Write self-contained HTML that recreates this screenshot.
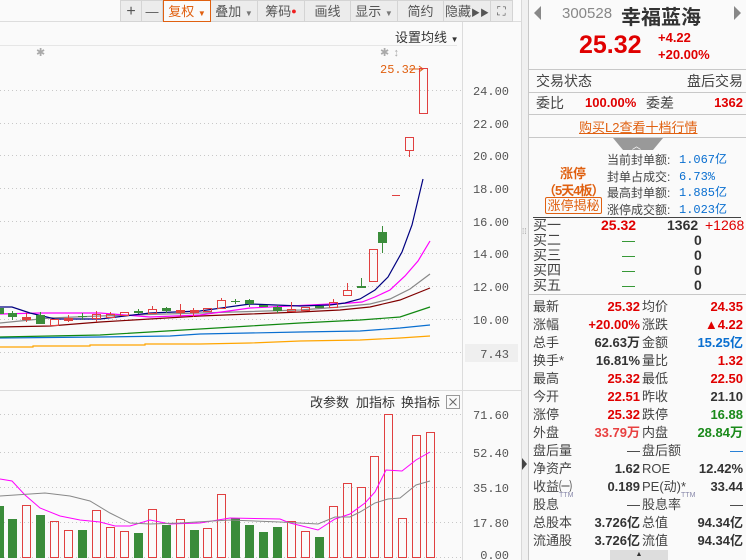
<!DOCTYPE html>
<html><head><meta charset="utf-8"><style>
*{margin:0;padding:0;box-sizing:border-box}
body{width:746px;height:560px;overflow:hidden;background:#fafafa;font-family:"Liberation Sans","Noto Sans CJK SC",sans-serif;position:relative}
.abs{position:absolute}
.tb{position:absolute;top:0;height:22px;background:#ececec;border:1px solid #d4d4d4;border-left:none;font-size:13px;color:#555;text-align:center;line-height:21px}
.rp{position:absolute;left:528px;top:0;width:218px;height:560px;background:#fafafa;border-left:1px solid #c8c8c8}
.row{position:absolute;left:4px;width:210px;font-size:13px;height:18px;line-height:18px;color:#444}
.row span{position:absolute;top:0}
.b{font-weight:bold}
.r{color:#e00000}.g{color:#1a8a1a}.bl{color:#0a6fd0}.k{color:#333}
.sp{font-size:7px;color:#88a;position:relative;top:-6px;line-height:0}
</style></head><body>
<div class="abs" style="left:0;top:0;width:521px;height:22px;background:#fafafa;border-bottom:1px solid #ddd"></div>
<div class="tb" style="left:120px;width:22px;border-left:1px solid #d4d4d4;font-size:16px">+</div>
<div class="tb" style="left:142px;width:21px">—</div>
<div class="tb" style="left:163px;width:48px;border:1px solid #e06010;color:#e06010;background:#fafafa">复权 <span style="font-size:8px">▼</span></div>
<div class="tb" style="left:211px;width:47px">叠加 <span style="font-size:8px;color:#777">▼</span></div>
<div class="tb" style="left:258px;width:47px">筹码<span style="color:#f02020;font-size:9px;vertical-align:top">●</span></div>
<div class="tb" style="left:305px;width:46px">画线</div>
<div class="tb" style="left:351px;width:47px">显示 <span style="font-size:8px;color:#777">▼</span></div>
<div class="tb" style="left:398px;width:46px">简约</div>
<div class="tb" style="left:444px;width:47px">隐藏<span style="font-size:9px">▶▶</span></div>
<div class="tb" style="left:491px;width:22px;font-size:12px">⛶</div>
<div class="abs" style="left:395px;top:27px;font-size:13px;color:#333">设置均线 <span style="font-size:8px">▼</span></div>
<div class="abs" style="left:0;top:45px;width:457px;height:1px;background:#e6e6e6"></div>
<div class="abs" style="left:521px;top:0;width:7px;height:560px;background:#f0f0f0;border-left:1px solid #d8d8d8"></div>
<div class="abs" style="left:522px;top:458px;width:0;height:0;border-left:5px solid #444;border-top:6px solid transparent;border-bottom:6px solid transparent"></div>
<div class="abs" style="left:522px;top:227px;font-size:8px;color:#999">⁞⁞</div>
<svg class="abs" style="left:0;top:0" width="521" height="560" font-family="Liberation Mono,monospace">
<line x1="462.5" y1="22" x2="462.5" y2="560" stroke="#dcdcdc"/>
<line x1="0" y1="390.5" x2="521" y2="390.5" stroke="#dcdcdc"/>
<g stroke="#c8c8c8" stroke-dasharray="1,3">
<line x1="0" y1="90.5" x2="462" y2="90.5"/><line x1="0" y1="123.5" x2="462" y2="123.5"/><line x1="0" y1="155.5" x2="462" y2="155.5"/><line x1="0" y1="188.5" x2="462" y2="188.5"/><line x1="0" y1="221.5" x2="462" y2="221.5"/><line x1="0" y1="253.5" x2="462" y2="253.5"/><line x1="0" y1="286.5" x2="462" y2="286.5"/><line x1="0" y1="319.5" x2="462" y2="319.5"/><line x1="0" y1="352.5" x2="462" y2="352.5"/>
<line x1="0" y1="414.5" x2="462" y2="414.5"/><line x1="0" y1="452.5" x2="462" y2="452.5"/><line x1="0" y1="487.5" x2="462" y2="487.5"/><line x1="0" y1="522.5" x2="462" y2="522.5"/><line x1="0" y1="557.5" x2="462" y2="557.5"/>
</g>
<g font-size="12" fill="#555" text-anchor="end">
<text x="509" y="95">24.00</text><text x="509" y="128">22.00</text><text x="509" y="160">20.00</text><text x="509" y="193">18.00</text><text x="509" y="226">16.00</text><text x="509" y="258">14.00</text><text x="509" y="291">12.00</text><text x="509" y="324">10.00</text>
<rect x="465" y="344" width="53" height="18" fill="#efefef"/><text x="509" y="358">7.43</text>
<text x="509" y="419">71.60</text><text x="509" y="457">52.40</text><text x="509" y="492">35.10</text><text x="509" y="527">17.80</text><text x="509" y="559">0.00</text>
</g>
<text x="380" y="73" font-size="12" fill="#e06010">25.32</text>
<path d="M409 69h14M419 66l4 3-4 3" stroke="#e06010" fill="none"/>
<text x="36" y="56" font-size="11" fill="#aaa">✱</text><text x="380" y="56" font-size="11" fill="#aaa">✱</text><text x="393" y="56" font-size="11" fill="#aaa">↕</text>
<g fill="none" stroke-width="1.2">
<polyline stroke="#ffa500" points="0,347 33,347 33,346 90,346 90,345 145,345 145,344 200,344 250,343 300,341 360,340 400,338 430,336"/>
<polyline stroke="#0a6fd0" points="0,338 100,337 170,336 200,334 300,332 360,331 400,328 430,325"/>
<polyline stroke="#118811" points="0,337 50,336 100,335 150,332 200,329 250,326 300,323 360,320 400,317 430,307"/>
<polyline stroke="#800000" points="0,327 50,326 100,322 150,319 200,316 250,314 300,312 340,310 370,307 400,300 430,288"/>
<polyline stroke="#888" points="0,323 50,318 100,316 200,313 300,310 340,307 370,304 390,299 410,289 430,274"/>
<polyline stroke="#ff00ff" points="0,314 40,313 100,313 150,317 200,315 250,308 330,304 350,303 362,302 375,297 390,290 405,276 418,261 430,241"/>
<polyline stroke="#000080" points="0,307 12,307 30,313 55,319 100,319 150,313 200,311 250,304 300,306 330,305 345,303 360,299 375,290 388,277 402,252 412,225 423,179"/>
</g>
<g stroke-width="1">
<rect x="0" y="308" width="4" height="6" fill="#3a8c3a"/>
<rect x="8" y="313" width="9" height="4" fill="#3a8c3a"/><line x1="12.5" y1="311" x2="12.5" y2="320" stroke="#3a8c3a"/>
<line x1="26.5" y1="313" x2="26.5" y2="322" stroke="#e04040"/><rect x="22" y="317" width="9" height="3" fill="#e04040"/>
<rect x="36" y="315" width="9" height="9" fill="#3a8c3a"/><line x1="40.5" y1="312" x2="40.5" y2="324" stroke="#3a8c3a"/>
<rect x="50.5" y="319.5" width="8" height="6" fill="none" stroke="#e04040"/>
<line x1="68.5" y1="315" x2="68.5" y2="322" stroke="#e04040"/><rect x="64" y="318" width="9" height="3" fill="#e04040"/>
<line x1="78" y1="316.5" x2="87" y2="316.5" stroke="#3a8c3a"/><line x1="82.5" y1="313" x2="82.5" y2="320" stroke="#3a8c3a"/>
<line x1="96.5" y1="311" x2="96.5" y2="322" stroke="#e04040"/><rect x="92.5" y="314.5" width="8" height="4" fill="none" stroke="#e04040"/>
<rect x="106.5" y="314.5" width="8" height="3" fill="none" stroke="#e04040"/><line x1="110.5" y1="312" x2="110.5" y2="314" stroke="#e04040"/>
<rect x="120.5" y="312.5" width="8" height="3" fill="none" stroke="#e04040"/>
<rect x="134" y="311" width="9" height="2" fill="#3a8c3a"/><line x1="138.5" y1="309" x2="138.5" y2="314" stroke="#3a8c3a"/>
<rect x="148.5" y="309.5" width="8" height="4" fill="none" stroke="#e04040"/><line x1="152.5" y1="306" x2="152.5" y2="309" stroke="#e04040"/>
<rect x="162" y="308" width="9" height="3" fill="#3a8c3a"/><line x1="166.5" y1="307" x2="166.5" y2="313" stroke="#3a8c3a"/>
<rect x="176" y="310" width="9" height="3" fill="#e04040"/><line x1="180.5" y1="304" x2="180.5" y2="316" stroke="#e04040"/>
<rect x="190" y="310" width="9" height="3" fill="#e04040"/><line x1="193.5" y1="308" x2="193.5" y2="317" stroke="#e04040"/>
<rect x="203.5" y="308.5" width="8" height="3" fill="none" stroke="#e04040"/>
<rect x="217.5" y="300.5" width="8" height="8" fill="none" stroke="#e04040"/><line x1="221.5" y1="298" x2="221.5" y2="300" stroke="#e04040"/>
<line x1="231" y1="301.5" x2="240" y2="301.5" stroke="#3a8c3a"/><line x1="235.5" y1="299" x2="235.5" y2="304" stroke="#3a8c3a"/>
<rect x="245" y="300" width="9" height="4" fill="#3a8c3a"/><line x1="249.5" y1="299" x2="249.5" y2="307" stroke="#3a8c3a"/>
<rect x="259" y="305" width="9" height="2" fill="#3a8c3a"/>
<rect x="273" y="307" width="9" height="4" fill="#3a8c3a"/><line x1="277.5" y1="305" x2="277.5" y2="313" stroke="#3a8c3a"/>
<rect x="287.5" y="309.5" width="8" height="2" fill="none" stroke="#e04040"/><line x1="291.5" y1="302" x2="291.5" y2="309" stroke="#e04040"/>
<rect x="301.5" y="307.5" width="8" height="3" fill="none" stroke="#e04040"/>
<rect x="315" y="306" width="9" height="2" fill="#3a8c3a"/>
<rect x="329.5" y="302.5" width="8" height="5" fill="none" stroke="#e04040"/><line x1="333.5" y1="299" x2="333.5" y2="302" stroke="#e04040"/>
<rect x="343.5" y="290.5" width="8" height="5" fill="none" stroke="#e04040"/><line x1="347.5" y1="283" x2="347.5" y2="290" stroke="#e04040"/>
<rect x="357" y="286" width="9" height="2" fill="#3a8c3a"/><line x1="361.5" y1="278" x2="361.5" y2="287" stroke="#3a8c3a"/>
<rect x="369.5" y="249.5" width="8" height="32" fill="none" stroke="#e04040"/>
<rect x="378" y="232" width="9" height="11" fill="#3a8c3a"/><line x1="382.5" y1="226" x2="382.5" y2="253" stroke="#3a8c3a"/>
<line x1="392" y1="195.5" x2="400" y2="195.5" stroke="#e04040"/>
<rect x="405.5" y="137.5" width="8" height="13" fill="none" stroke="#e04040"/><line x1="409.5" y1="151" x2="409.5" y2="157" stroke="#e04040"/>
<rect x="419.5" y="68.5" width="8" height="45" fill="none" stroke="#e04040"/>
</g>
<text x="310" y="407" font-size="13" fill="#333" font-family="Liberation Sans,Noto Sans CJK SC,sans-serif">改参数</text>
<text x="356" y="407" font-size="13" fill="#333" font-family="Liberation Sans,Noto Sans CJK SC,sans-serif">加指标</text>
<text x="401" y="407" font-size="13" fill="#333" font-family="Liberation Sans,Noto Sans CJK SC,sans-serif">换指标</text>
<rect x="446.5" y="395.5" width="13" height="13" fill="#fafafa" stroke="#999"/><path d="M449.5 398.5l7 7M456.5 398.5l-7 7" stroke="#666"/>
<g fill="#3a8c3a">
<rect x="0" y="506" width="4" height="52"/><rect x="8" y="519" width="9" height="39"/><rect x="36" y="515" width="9" height="43"/><rect x="78" y="530" width="9" height="28"/><rect x="134" y="533" width="9" height="25"/><rect x="162" y="525" width="9" height="33"/><rect x="190" y="530" width="9" height="28"/><rect x="231" y="518" width="9" height="40"/><rect x="245" y="525" width="9" height="33"/><rect x="259" y="532" width="9" height="26"/><rect x="273" y="527" width="9" height="31"/><rect x="315" y="537" width="9" height="21"/>
</g>
<g fill="none" stroke="#e04040">
<rect x="22.5" y="505.5" width="8" height="52"/><rect x="50.5" y="521.5" width="8" height="36"/><rect x="64.5" y="530.5" width="8" height="27"/><rect x="92.5" y="510.5" width="8" height="47"/><rect x="106.5" y="527.5" width="8" height="30"/><rect x="120.5" y="531.5" width="8" height="26"/><rect x="148.5" y="509.5" width="8" height="48"/><rect x="176.5" y="519.5" width="8" height="38"/><rect x="203.5" y="528.5" width="8" height="29"/><rect x="217.5" y="494.5" width="8" height="63"/><rect x="287.5" y="521.5" width="8" height="36"/><rect x="301.5" y="531.5" width="8" height="26"/><rect x="329.5" y="506.5" width="8" height="51"/><rect x="343.5" y="483.5" width="8" height="74"/><rect x="357.5" y="487.5" width="8" height="70"/><rect x="370.5" y="456.5" width="8" height="101"/><rect x="384.5" y="414.5" width="8" height="143"/><rect x="398.5" y="518.5" width="8" height="39"/><rect x="412.5" y="435.5" width="8" height="122"/><rect x="426.5" y="432.5" width="8" height="125"/>
</g>
<polyline fill="none" stroke="#ff00ff" points="0,479 12,481 25,495 40,508 60,516 80,520 100,522 115,526 130,526 150,520 170,524 200,523 230,518 280,519 290,523 318,530 335,519 350,514 365,503 375,492 386,470 402,471 416,460 430,452"/>
<polyline fill="none" stroke="#888" points="0,496 30,494 45,493 70,496 90,501 110,513 130,523 150,524 180,523 230,520 280,522 318,524 335,517 350,517 360,512 375,503 388,499 400,498 416,485 430,481"/>
</svg>
<div class="rp">
<div class="abs" style="left:5px;top:6px;width:0;height:0;border-right:7px solid #888;border-top:7px solid transparent;border-bottom:7px solid transparent"></div>
<div class="abs" style="left:205px;top:6px;width:0;height:0;border-left:7px solid #888;border-top:7px solid transparent;border-bottom:7px solid transparent"></div>
<div class="abs" style="left:33px;top:5px;font-size:15px;color:#888">300528</div>
<div class="abs" style="left:92px;top:1px;font-size:20px;font-weight:bold;color:#333">幸福蓝海</div>
<div class="abs b r" style="left:50px;top:31px;font-size:25px">25.32</div>
<div class="abs b r" style="left:129px;top:30px;font-size:13px">+4.22</div>
<div class="abs b r" style="left:129px;top:47px;font-size:13px">+20.00%</div>
<div class="abs" style="left:0;top:69px;width:218px;height:1px;background:#c8c8c8"></div>
<div class="abs" style="left:0;top:92px;width:218px;height:1px;background:#c8c8c8"></div>
<div class="abs" style="left:0;top:114px;width:218px;height:1px;background:#c8c8c8"></div>
<div class="abs" style="left:0;top:137px;width:218px;height:1px;background:#c8c8c8"></div>
<div class="row" style="top:72px;font-size:14px"><span style="left:3px">交易状态</span><span style="right:0">盘后交易</span></div>
<div class="row" style="top:94px;font-size:14px"><span style="left:3px">委比</span><span class="b r" style="left:52px;font-size:13px">100.00%</span><span style="left:113px">委差</span><span class="b r" style="right:0;font-size:13px">1362</span></div>
<div class="abs" style="left:50px;top:117px;font-size:13px;color:#e06010;text-decoration:underline">购买L2查看十档行情</div>
<div class="abs" style="left:84px;top:138px;width:50px;height:12px;background:#999;clip-path:polygon(0 0,100% 0,80% 100%,20% 100%)"></div>
<div class="abs" style="left:103px;top:139px;font-size:9px;color:#fff">︿</div>
<div class="abs b" style="left:31px;top:163px;font-size:13px;color:#e06010">涨停</div>
<div class="abs b" style="left:14px;top:180px;font-size:13px;color:#e06010;letter-spacing:-1px">（5天4板）</div>
<div class="abs" style="left:16px;top:197px;width:57px;height:17px;border:1px solid #e06010;font-size:13px;color:#e06010;line-height:15px;text-align:center;border-radius:2px;white-space:nowrap">涨停揭秘</div>
<div class="abs" style="left:78px;top:152px;font-size:12px;line-height:16.5px;color:#444">当前封单额:<br>封单占成交:<br>最高封单额:<br>涨停成交额:</div>
<div class="abs" style="left:150px;top:152px;font-size:12px;line-height:16.5px;color:#0a6fd0;font-family:'Liberation Mono','Noto Sans CJK SC',monospace">1.067亿<br>6.73%<br>1.885亿<br>1.023亿</div>
<div class="abs" style="left:4px;top:217px;width:208px;height:1px;background:#444"></div>
<div class="abs" style="left:4px;top:218px;font-size:14px;line-height:15px;color:#444">买一<br>买二<br>买三<br>买四<br>买五</div>
<div class="abs b r" style="left:72px;top:218px;font-size:14px;line-height:15px">25.32</div>
<div class="abs" style="left:93px;top:218px;font-size:13px;line-height:15px;color:#1a8a1a"><br>—<br>—<br>—<br>—</div>
<div class="abs b k" style="left:138px;top:218px;font-size:14px;line-height:15px">1362</div>
<div class="abs r" style="left:176px;top:218px;font-size:14px;line-height:15px">+1268</div>
<div class="abs b k" style="left:165px;top:233px;font-size:14px;line-height:15px">0<br>0<br>0<br>0</div>
<div class="abs" style="left:0;top:294px;width:218px;height:1px;background:#c8c8c8"></div>
<div style="position:absolute;left:0;top:298px;font-size:14px">
<div class="row" style="top:0"><span style="left:0">最新</span><span class="b r" style="right:103px">25.32</span><span style="left:109px">均价</span><span class="b r" style="right:0">24.35</span></div>
<div class="row" style="top:18px"><span style="left:0">涨幅</span><span class="b r" style="right:103px">+20.00%</span><span style="left:109px">涨跌</span><span class="b r" style="right:0">▲4.22</span></div>
<div class="row" style="top:36px"><span style="left:0">总手</span><span class="b k" style="right:103px">62.63万</span><span style="left:109px">金额</span><span class="b bl" style="right:0">15.25亿</span></div>
<div class="row" style="top:54px"><span style="left:0">换手*</span><span class="b k" style="right:103px">16.81%</span><span style="left:109px">量比</span><span class="b r" style="right:0">1.32</span></div>
<div class="row" style="top:72px"><span style="left:0">最高</span><span class="b r" style="right:103px">25.32</span><span style="left:109px">最低</span><span class="b r" style="right:0">22.50</span></div>
<div class="row" style="top:90px"><span style="left:0">今开</span><span class="b r" style="right:103px">22.51</span><span style="left:109px">昨收</span><span class="b k" style="right:0">21.10</span></div>
<div class="row" style="top:108px"><span style="left:0">涨停</span><span class="b r" style="right:103px">25.32</span><span style="left:109px">跌停</span><span class="b g" style="right:0">16.88</span></div>
<div class="row" style="top:126px"><span style="left:0">外盘</span><span class="b" style="right:103px;color:#e84040">33.79万</span><span style="left:109px">内盘</span><span class="b g" style="right:0">28.84万</span></div>
<div class="row" style="top:144px"><span style="left:0">盘后量</span><span class="k" style="right:103px">—</span><span style="left:109px">盘后额</span><span class="bl" style="right:0">—</span></div>
<div class="row" style="top:162px"><span style="left:0">净资产</span><span class="b k" style="right:103px">1.62</span><span style="left:109px">ROE</span><span class="b k" style="right:0">12.42%</span></div>
<div class="row" style="top:180px"><span style="left:0">收益㈠</span><span class="b k" style="right:103px">0.189</span><span style="left:109px">PE(动)*</span><span class="b k" style="right:0">33.44</span></div>
<div class="row" style="top:198px"><span style="left:0">股息<span class="sp">TTM</span></span><span class="k" style="right:103px">—</span><span style="left:109px">股息率<span class="sp">TTM</span></span><span class="k" style="right:0">—</span></div>
<div class="row" style="top:216px"><span style="left:0">总股本</span><span class="b k" style="right:103px">3.726亿</span><span style="left:109px">总值</span><span class="b k" style="right:0">94.34亿</span></div>
<div class="row" style="top:234px"><span style="left:0">流通股</span><span class="b k" style="right:103px">3.726亿</span><span style="left:109px">流值</span><span class="b k" style="right:0">94.34亿</span></div>
</div>
<div class="abs" style="left:81px;top:550px;width:58px;height:10px;background:#ddd;font-size:7px;text-align:center;color:#333;line-height:10px">▲</div>
</div>
</body></html>
